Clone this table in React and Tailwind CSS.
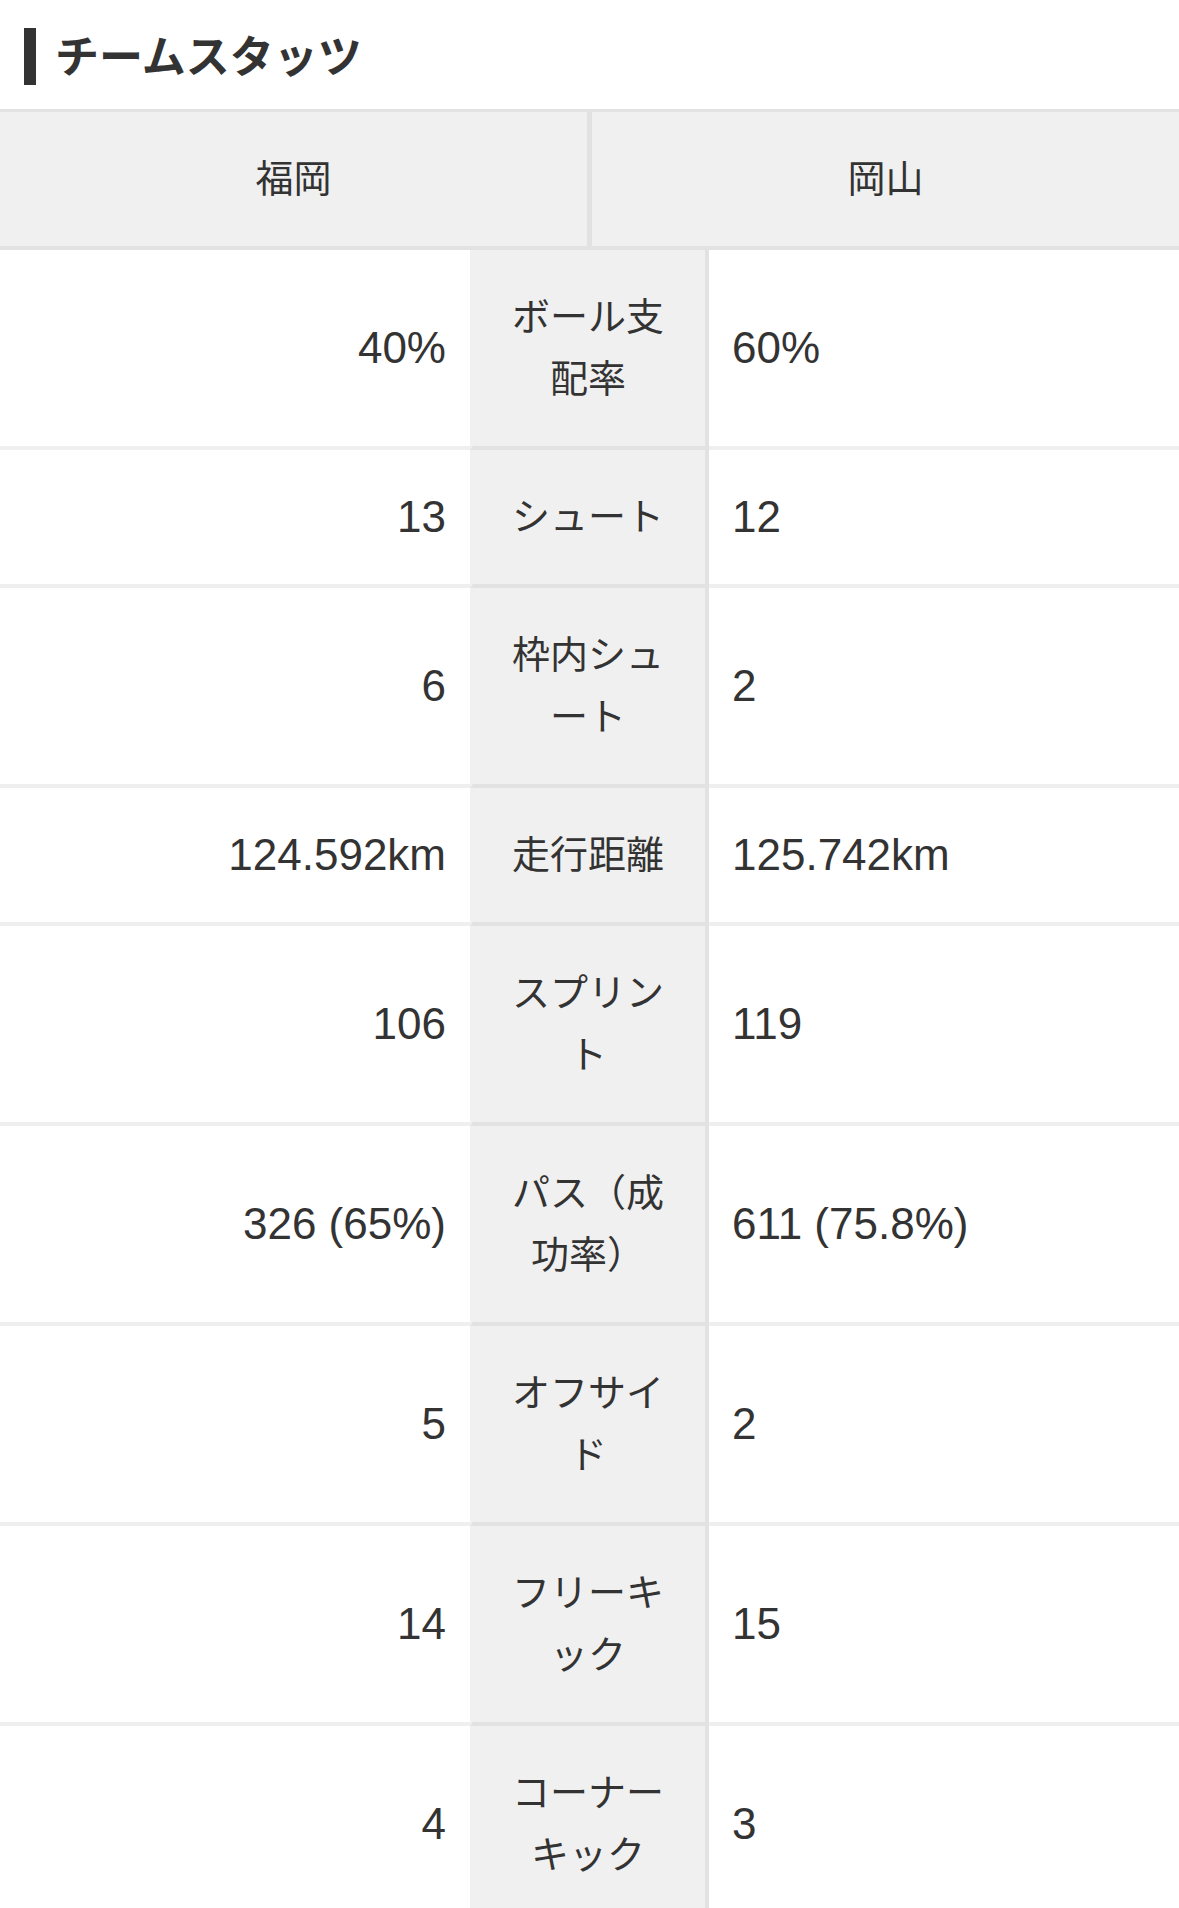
import React from "react";

const rows = [
  { l: "40%", label: "ボール支配率", r: "60%" },
  { l: "13", label: "シュート", r: "12" },
  { l: "6", label: "枠内シュート", r: "2" },
  { l: "124.592km", label: "走行距離", r: "125.742km" },
  { l: "106", label: "スプリント", r: "119" },
  { l: "326 (65%)", label: "パス（成功率）", r: "611 (75.8%)" },
  { l: "5", label: "オフサイド", r: "2" },
  { l: "14", label: "フリーキック", r: "15" },
  { l: "4", label: "コーナーキック", r: "3" },
];

const jp = { fontFamily: '"Noto Sans CJK JP", "Noto Sans", sans-serif' };
const num = { fontFamily: '"Liberation Sans", "Noto Sans CJK JP", sans-serif' };

export default function App() {
  return (
    <div className="w-[1179px] h-[1908px] overflow-hidden bg-white text-[#333333]">
      {/* Title */}
      <div className="flex items-center pt-[28px] pb-[24px] pl-[24px]">
        <div className="w-[12px] h-[57px] bg-[#333333]" />
        <h2
          className="ml-[19px] text-[44px] leading-[57px] font-bold -translate-y-[2px]"
          style={jp}
        >
          チームスタッツ
        </h2>
      </div>

      {/* Header */}
      <div
        className="flex border-t-[3px] border-b-[4px] border-[#e2e2e2] bg-[#f0f0f0]"
        style={jp}
      >
        <div className="w-[592px] border-r-[5px] border-[#e2e2e2] pt-[33px] pb-[39px] text-center text-[38px] leading-[62px]">
          福岡
        </div>
        <div className="w-[587px] pt-[33px] pb-[39px] text-center text-[38px] leading-[62px]">
          岡山
        </div>
      </div>

      {/* Rows */}
      <div className="grid grid-cols-[470px_239px_470px]">
        {rows.map((row, i) => (
          <React.Fragment key={i}>
            <div
              className="flex items-center justify-end pr-[24px] bg-white border-b-[4px] border-[#efefef] text-[44px] leading-none"
              style={num}
            >
              {row.l}
            </div>
            <div
              className="bg-[#f0f0f0] border-l-[3px] border-l-[#f0f0f0] border-r-[4px] border-r-[#e2e2e2] border-b-[4px] border-b-[#e2e2e2] pl-[34px] pr-[36px] pt-[33px] pb-[39px] text-center text-[38px] leading-[62px]"
              style={jp}
            >
              {row.label}
            </div>
            <div
              className="flex items-center justify-start pl-[23px] bg-white border-b-[4px] border-[#efefef] text-[44px] leading-none"
              style={num}
            >
              {row.r}
            </div>
          </React.Fragment>
        ))}
      </div>
    </div>
  );
}
